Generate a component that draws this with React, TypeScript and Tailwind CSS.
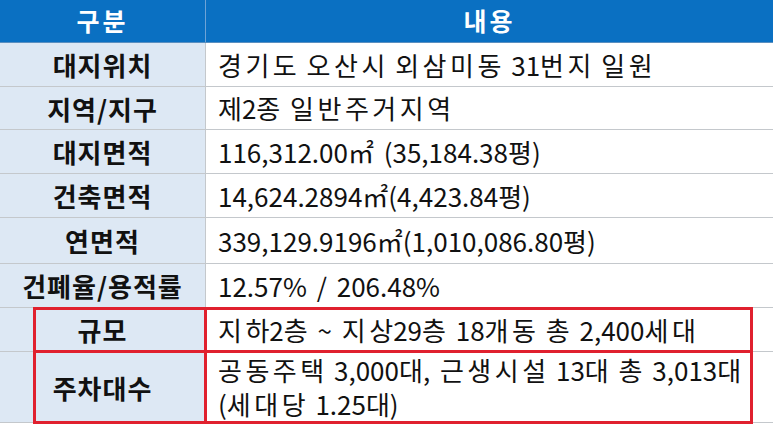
const rows: { label: string; value: string; h: string }[] = [
  { label: '대지위치', value: '경기도 오산시 외삼미동 31번지 일원', h: 'h-[44px]' },
  { label: '지역/지구', value: '제2종 일반주거지역', h: 'h-[43px]' },
  { label: '대지면적', value: '116,312.00㎡ (35,184.38평)', h: 'h-[44px]' },
  { label: '건축면적', value: '14,624.2894㎡(4,423.84평)', h: 'h-[44px]' },
  { label: '연면적', value: '339,129.9196㎡(1,010,086.80평)', h: 'h-[46px]' },
  { label: '건폐율/용적률', value: '12.57% / 206.48%', h: 'h-[44px]' },
  { label: '규모', value: '지하2층 ~ 지상29층 18개동 총 2,400세대', h: 'h-[44px]' },
  { label: '주차대수', value: '공동주택 3,000대, 근생시설 13대 총 3,013대\n(세대당 1.25대)', h: 'h-[71px]' },
];

// hangul is set wider than the digits in the source sheet;
// the last syllable of a run gets no extra space so "대," and "평)" stay tight
function Spaced({ text }: { text: string }) {
  return (
    <>
      {text.split(/([\uAC00-\uD7A3]+)/).map((part, i) =>
        /[\uAC00-\uD7A3]/.test(part) ? (
          <span key={i}>
            <span className="tracking-[3.5px]">{part.slice(0, -1)}</span>
            {part.slice(-1)}
          </span>
        ) : (
          <span key={i}>{part}</span>
        ),
      )}
    </>
  );
}

export default function App() {
  return (
    <div className="relative w-[773px] h-[436px] bg-white font-['Noto_Sans_CJK_KR','Noto_Sans',sans-serif] text-[#111]">
      <div className="flex h-[43px] bg-[#0a70c2] text-white font-bold text-[25px] tracking-[3px] border-b border-[#5a8fc0]">
        <div className="w-[206px] flex items-center justify-center border-r border-[#6ea3d6]">구분</div>
        <div className="flex-1 flex items-center justify-center">내용</div>
      </div>
      {rows.map((r) => (
        <div key={r.label} className={`flex ${r.h} border-b border-[#c4c8cc]`}>
          <div className="w-[206px] bg-[#dde8f4] border-r border-[#c4c8cc] flex items-center justify-center font-bold text-[26px] tracking-[1px]">
            {r.label}
          </div>
          <div className="flex-1 flex items-center pl-[12px] text-[26px] leading-[34px] whitespace-nowrap [word-spacing:4px]">
            <div className="flex flex-col">
              {r.value.split('\n').map((line) => (
                <div key={line}>
                  <Spaced text={line} />
                </div>
              ))}
            </div>
          </div>
        </div>
      ))}
      <div className="absolute left-[33px] top-[307px] w-[720px] h-[117px] border-[3px] border-[#e0202e] pointer-events-none" />
      <div className="absolute left-[204px] top-[307px] w-[3px] h-[117px] bg-[#e0202e]" />
      <div className="absolute left-[33px] top-[350px] w-[720px] h-[3px] bg-[#e0202e]" />
    </div>
  );
}
